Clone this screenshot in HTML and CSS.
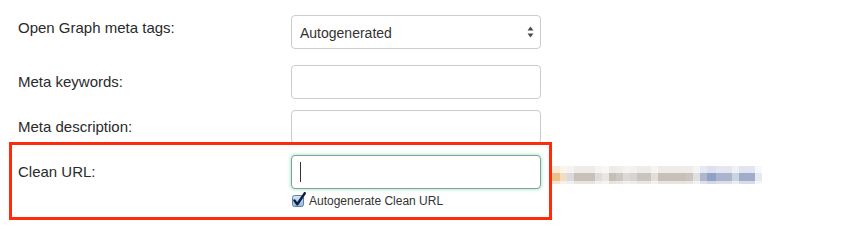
FILE: index.html
```html
<!DOCTYPE html>
<html>
<head>
<meta charset="utf-8">
<link rel="stylesheet" href="styles.css">
</head>
<body>
<div class="form">
  <div class="row row-select">
    <div class="label label-tight">Open Graph meta tags:</div>
    <div class="field select">
      <span>Autogenerated</span>
      <svg class="arrows" width="7" height="12" viewBox="0 0 7 12"><path d="M3.5 0.5 L6.5 4.5 L0.5 4.5 Z" fill="#4a4a4a"/><path d="M3.5 11.5 L6.5 7.5 L0.5 7.5 Z" fill="#4a4a4a"/></svg>
    </div>
  </div>
  <div class="row">
    <div class="label">Meta keywords:</div>
    <div class="field"></div>
  </div>
  <div class="row">
    <div class="label">Meta description:</div>
    <div class="field"></div>
  </div>
  <div class="group">
    <div class="row row-last">
      <div class="label">Clean URL:</div>
      <div class="field focused"><span class="caret"></span></div>
      <div class="blur">
        <div class="strip strip-top"></div>
        <div class="strip strip-mid"></div>
        <div class="strip strip-bot"></div>
      </div>
    </div>
    <div class="check-row">
      <svg class="checkbox" width="16" height="16" viewBox="0 0 16 16">
        <defs>
          <linearGradient id="cbg" x1="0" y1="0" x2="0" y2="1">
            <stop offset="0" stop-color="#d6e6fa"/>
            <stop offset="1" stop-color="#8fb6e8"/>
          </linearGradient>
        </defs>
        <rect x="1.5" y="3.5" width="11" height="11" rx="2" fill="url(#cbg)" stroke="#5d7fae"/>
        <path d="M3.5 8.5 L6.3 12.2 L13.8 1.2" fill="none" stroke="#0f1f3a" stroke-width="2.4" stroke-linecap="round" stroke-linejoin="round"/>
      </svg>
      <span class="check-label">Autogenerate Clean URL</span>
    </div>
  </div>
</div>
</body>
</html>
```
FILE: styles.css
```css
html, body {
  margin: 0;
  padding: 0;
  background: #ffffff;
}
body {
  font-family: "Liberation Sans", Arial, sans-serif;
  color: #333333;
  min-height: 244px;
}
.form {
  padding: 15px 0 36px 18px;
}
.row {
  display: flex;
  align-items: flex-start;
  margin-bottom: 11px;
}
.row-select {
  margin-bottom: 16px;
}
.row-last {
  margin-bottom: 0;
}
.label {
  width: 273px;
  flex: none;
  font-size: 15px;
  line-height: 20px;
  padding-top: 7px;
  color: #2a2a2a;
}
.label-tight {
  padding-top: 3px;
}
.field {
  width: 250px;
  height: 34px;
  box-sizing: border-box;
  border: 1px solid #cccccc;
  border-radius: 4px;
  background: #ffffff;
  flex: none;
}
.select {
  display: flex;
  align-items: center;
  justify-content: space-between;
  padding: 0 6px 0 8px;
  font-size: 14px;
  color: #333333;
}
.select span {
  padding-top: 1px;
}
.arrows {
  display: block;
}
.focused {
  border-color: #8e9c99;
  box-shadow: 0 0 3px 1px rgba(150, 232, 205, 0.75);
  display: flex;
  align-items: center;
  padding-left: 8px;
}
.caret {
  display: block;
  width: 1px;
  height: 20px;
  background: #333333;
}
.group {
  position: relative;
}
.group::after {
  content: "";
  position: absolute;
  top: -13px;
  left: -9px;
  width: 543px;
  height: 78px;
  box-sizing: border-box;
  border: 3px solid #ff2a0c;
  pointer-events: none;
}
.blur {
  margin-left: 11px;
  margin-top: 11px;
  width: 210px;
  flex: none;
}
.strip {
  --strip: linear-gradient(to right,
    #e9bd85 0 8px, #f0dcc0 8px 15px, #d8d8dc 15px 22px, #c6beb4 22px 43px,
    #dedad6 43px 50px, #e8e5e2 50px 57px, #c2bdb2 57px 64px, #ccc3c1 64px 71px,
    #dcd6d4 71px 78px, #d6d1cd 78px 85px, #c8c1b9 85px 99px, #e0dcd8 99px 106px,
    #c5bdb4 106px 134px, #c8c2bb 134px 141px, #dfdddf 141px 148px, #a9b4cc 148px 155px,
    #8b9bc2 155px 164px, #a5b0cc 164px 180px, #c9d0e0 180px 187px, #9aa8c8 187px 203px,
    #e4e8f0 203px 210px);
  background: var(--strip);
}
.strip-top {
  height: 7px;
  opacity: 0.3;
}
.strip-mid {
  height: 8px;
  opacity: 0.95;
}
.strip-bot {
  height: 3px;
  opacity: 0.4;
}
.check-row {
  display: flex;
  align-items: center;
  margin-top: 4px;
  margin-left: 273px;
  height: 16px;
}
.checkbox {
  display: block;
  margin-right: 2px;
  margin-top: -2px;
}
.check-label {
  font-size: 12px;
  line-height: 14px;
  color: #333333;
}
```
